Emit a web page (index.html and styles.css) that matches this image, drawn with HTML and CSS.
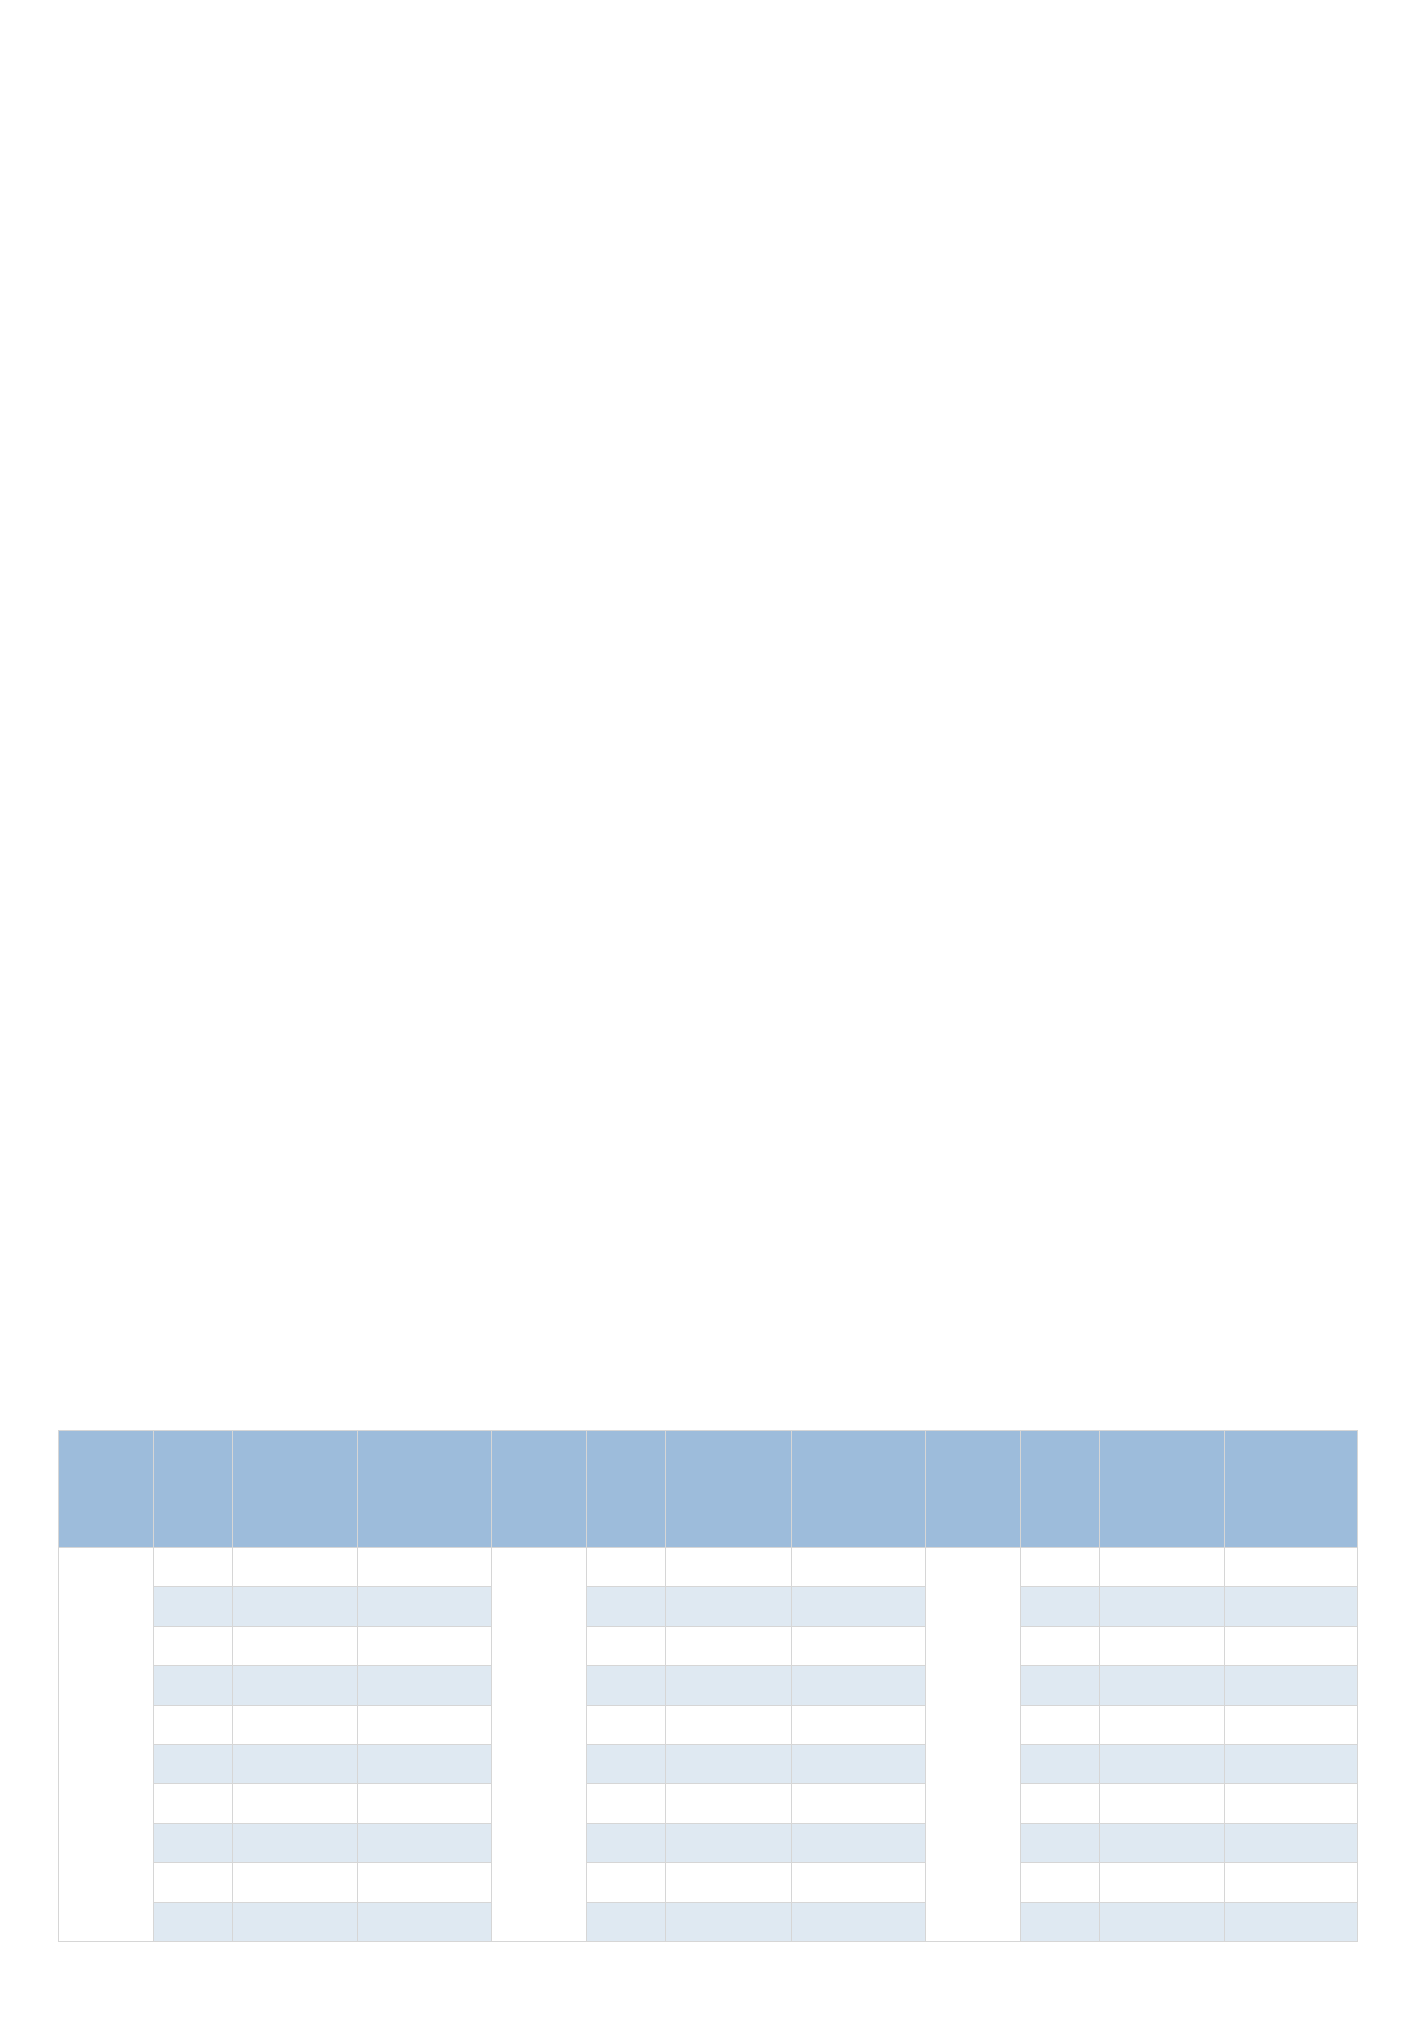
FILE: index.html
```html
<!DOCTYPE html>
<html lang="en">
<head>
<meta charset="utf-8">
<title>Table</title>
<link rel="stylesheet" href="styles.css">
</head>
<body>
<div class="page">
  <div class="chart-area"></div>
  <table class="grid">
    <colgroup>
      <col class="c-a"><col class="c-b"><col class="c-c"><col class="c-d">
      <col class="c-a"><col class="c-b"><col class="c-c"><col class="c-d">
      <col class="c-a"><col class="c-b"><col class="c-c"><col class="c-e">
    </colgroup>
    <thead>
      <tr><th></th><th></th><th></th><th></th><th></th><th></th><th></th><th></th><th></th><th></th><th></th><th></th></tr>
    </thead>
    <tbody>
      <tr class="odd"><td class="group" rowspan="10"></td><td></td><td></td><td></td><td class="group" rowspan="10"></td><td></td><td></td><td></td><td class="group" rowspan="10"></td><td></td><td></td><td></td></tr>
      <tr class="even"><td></td><td></td><td></td><td></td><td></td><td></td><td></td><td></td><td></td></tr>
      <tr class="odd"><td></td><td></td><td></td><td></td><td></td><td></td><td></td><td></td><td></td></tr>
      <tr class="even"><td></td><td></td><td></td><td></td><td></td><td></td><td></td><td></td><td></td></tr>
      <tr class="odd"><td></td><td></td><td></td><td></td><td></td><td></td><td></td><td></td><td></td></tr>
      <tr class="even"><td></td><td></td><td></td><td></td><td></td><td></td><td></td><td></td><td></td></tr>
      <tr class="odd"><td></td><td></td><td></td><td></td><td></td><td></td><td></td><td></td><td></td></tr>
      <tr class="even"><td></td><td></td><td></td><td></td><td></td><td></td><td></td><td></td><td></td></tr>
      <tr class="odd"><td></td><td></td><td></td><td></td><td></td><td></td><td></td><td></td><td></td></tr>
      <tr class="even"><td></td><td></td><td></td><td></td><td></td><td></td><td></td><td></td><td></td></tr>
    </tbody>
  </table>
</div>
</body>
</html>
```
FILE: styles.css
```css
html, body {
  margin: 0;
  padding: 0;
  background: #ffffff;
  font-family: "Liberation Sans", Arial, sans-serif;
}

.page {
  padding: 0 64px 0 58px;
}

.chart-area {
  height: 1430px;
}

.grid {
  border-collapse: collapse;
  table-layout: fixed;
  width: 1300px;
}

.c-a { width: 95px; }
.c-b { width: 79px; }
.c-c { width: 125px; }
.c-d { width: 134px; }
.c-e { width: 133px; }

.grid th,
.grid td {
  border: 1px solid #d6d6d6;
  padding: 0;
}

.grid th {
  background: #9dbcdb;
  height: 116px;
}

.grid td {
  height: 38.4px;
}

.grid tr.odd td {
  background: #ffffff;
}

.grid tr.even td {
  background: #dfe9f2;
}

.grid td.group {
  background: #ffffff;
}
```
